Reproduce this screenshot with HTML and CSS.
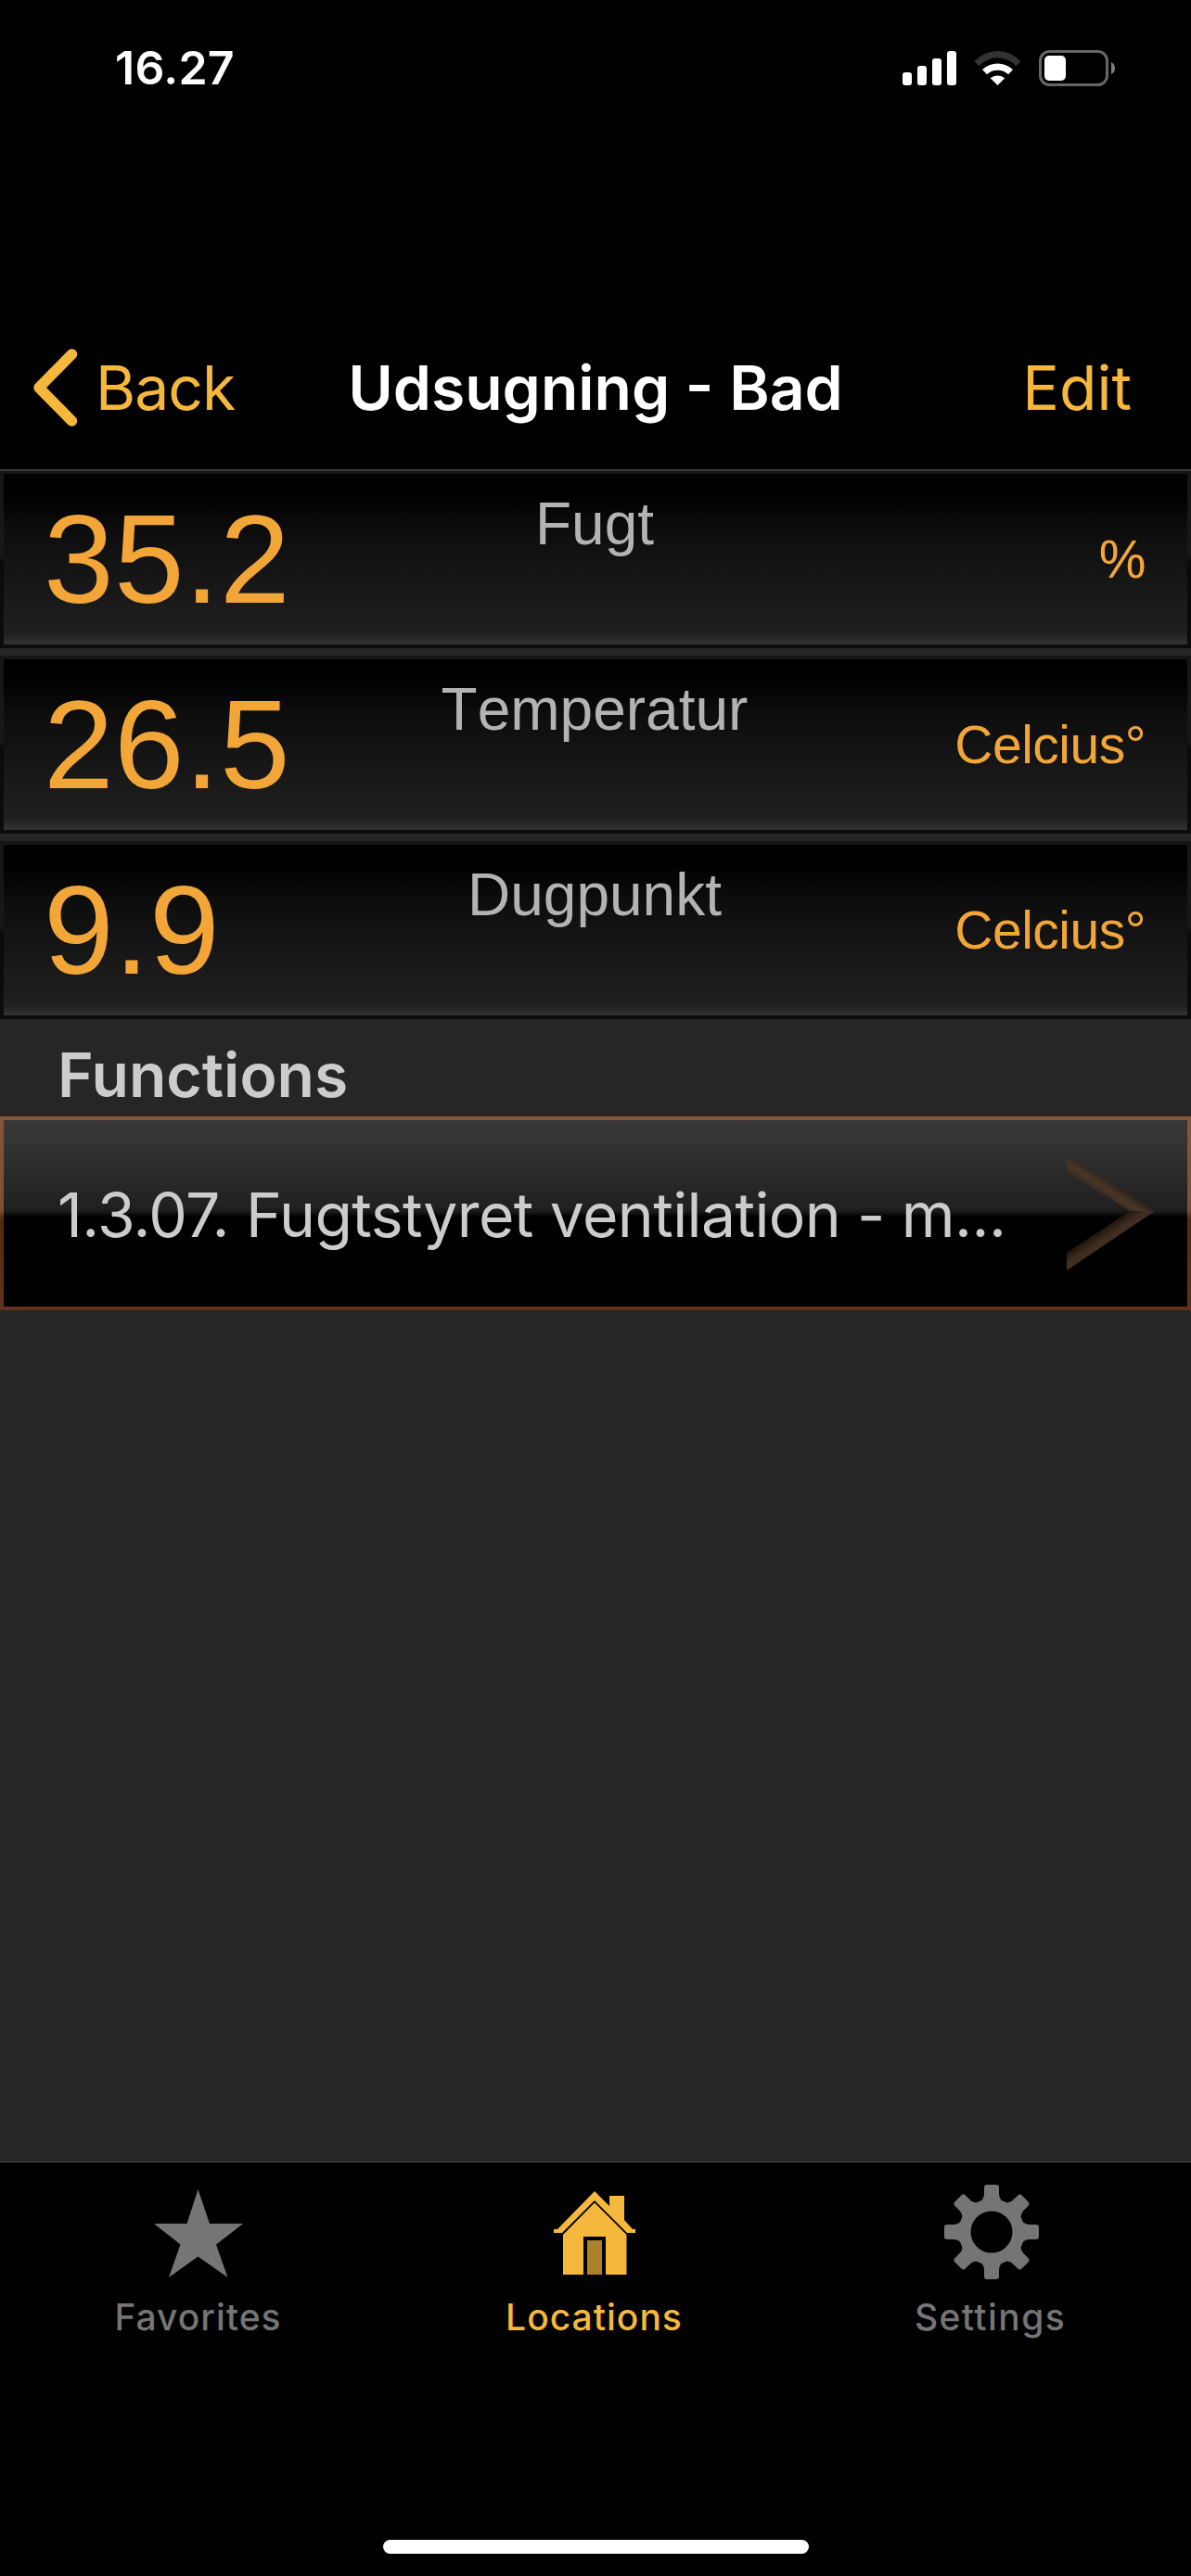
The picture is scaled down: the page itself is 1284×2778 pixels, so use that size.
FILE: index.html
```
<!DOCTYPE html>
<html lang="da">
<head>
    <meta charset="UTF-8">
    <meta name="viewport" content="width=device-width, initial-scale=1.0">
    <title>Udsugning - Bad</title>
    <link rel="stylesheet" href="styles.css">
</head>
<body>

    <div class="status-bar">
        <span class="time">16.27</span>
        <div class="status-icons">
            <svg width="58" height="37" viewBox="0 0 58 37" fill="#fff">
                <rect x="0" y="23" width="10" height="14" rx="3"/>
                <rect x="16" y="16" width="10" height="21" rx="3"/>
                <rect x="32" y="8" width="10" height="29" rx="3"/>
                <rect x="48" y="0" width="10" height="37" rx="3"/>
            </svg>
            <svg width="51" height="37" viewBox="0 0 51 37" fill="#fff">
                <path fill="#333" d="M0.5 11A34 34 0 0 1 50.5 11L45.5 16.2A27 27 0 0 0 5.5 16.2Z"/>
                <path d="M9 20A24 24 0 0 1 42 20L37 25.3A17 17 0 0 0 14 25.3Z"/>
                <path d="M17.7 29.3A12 12 0 0 1 33.3 29.3L25.5 37Z"/>
            </svg>
            <svg width="82" height="39" viewBox="0 0 82 39">
                <rect x="1.5" y="1.5" width="72" height="36" rx="10" fill="none" stroke="#666" stroke-width="3"/>
                <rect x="6" y="6" width="23" height="27" rx="5" fill="#fff"/>
                <path d="M78 13Q82 15 82 19.5T78 26Z" fill="#808080"/>
            </svg>
        </div>
    </div>

    <div class="nav-bar">
        <div class="back">
            <svg width="48" height="84" viewBox="0 0 48 84" fill="none" stroke="#f5b83d" stroke-width="11.5" stroke-linecap="round" stroke-linejoin="round">
                <path d="M42.500 6L7 42L42.500 78"/>
            </svg>
            <span>Back</span>
        </div>
        <h1>Udsugning - Bad</h1>
        <span class="edit">Edit</span>
    </div>

    <div class="content">
        <div class="readings">
            <div class="reading">
                <div class="reading-inner">
                    <span class="value">35.2</span>
                    <span class="name">Fugt</span>
                    <span class="unit">%</span>
                </div>
            </div>
            <div class="reading">
                <div class="reading-inner">
                    <span class="value">26.5</span>
                    <span class="name">Temperatur</span>
                    <span class="unit">Celcius°</span>
                </div>
            </div>
            <div class="reading">
                <div class="reading-inner">
                    <span class="value">9.9</span>
                    <span class="name">Dugpunkt</span>
                    <span class="unit">Celcius°</span>
                </div>
            </div>
        </div>

        <h2>Functions</h2>

        <div class="function">
            <div class="function-inner">
                <span class="function-name">1.3.07. Fugtstyret ventilation - m...</span>
                <svg width="96" height="126" viewBox="0 1 96 126">
                    <defs>
                        <linearGradient id="arrowTop" gradientUnits="userSpaceOnUse" x1="30" y1="38" x2="40" y2="23">
                            <stop offset="0" stop-color="#3a2c20"/>
                            <stop offset="0.5" stop-color="#483525"/>
                            <stop offset="1" stop-color="#2e251d"/>
                        </linearGradient>
                        <linearGradient id="arrowBottom" gradientUnits="userSpaceOnUse" x1="40" y1="79" x2="50" y2="94">
                            <stop offset="0" stop-color="#20170f"/>
                            <stop offset="0.5" stop-color="#3e2c1f"/>
                            <stop offset="1" stop-color="#463122"/>
                        </linearGradient>
                    </defs>
                    <path d="M0 0L95 60H68L0 17Z" fill="url(#arrowTop)"/>
                    <path d="M68 60H95L0 124V105Z" fill="url(#arrowBottom)"/>
                </svg>
            </div>
        </div>
    </div>

    <div class="tab-bar">
        <div class="tab">
            <svg width="96" height="104" viewBox="0 0 96 104" fill="#757575">
                <path d="M47.5 9L60 46H96L67 68.500L79.500 104L47.500 81.500L16 104L28.500 68.500L0 46H35.500Z"/>
            </svg>
            <span>Favorites</span>
        </div>
        <div class="tab active">
            <svg width="90" height="104" viewBox="0 0 90 104" fill="#f5b83d">
                <path d="M45 11L61 27V16H77V42L86 52H89V56H80L45 21L10 56H1V52H5Z"/>
                <path d="M45 23.500L79.500 58V101H57V60H33V101H11V58Z"/>
                <rect x="37" y="64" width="16" height="37" fill="#ab822a"/>
            </svg>
            <span>Locations</span>
        </div>
        <div class="tab">
            <svg width="102" height="104" viewBox="-52 -55 102 104">
                <defs>
                    <path id="tooth" d="M-16 -30Q-8 -34 -8 -41V-48Q-8 -51 -5 -51H5Q8 -51 8 -48V-41Q8 -34 16 -30Z"/>
                </defs>
                <g fill="#757575">
                    <use href="#tooth"/>
                    <use href="#tooth" transform="rotate(45)"/>
                    <use href="#tooth" transform="rotate(90)"/>
                    <use href="#tooth" transform="rotate(135)"/>
                    <use href="#tooth" transform="rotate(180)"/>
                    <use href="#tooth" transform="rotate(225)"/>
                    <use href="#tooth" transform="rotate(270)"/>
                    <use href="#tooth" transform="rotate(315)"/>
                </g>
                <circle r="29" fill="none" stroke="#757575" stroke-width="13"/>
            </svg>
            <span class="settings">Settings</span>
        </div>
    </div>

    <div class="home-indicator"></div>

</body>
</html>
```
FILE: styles.css
```
* {
    box-sizing: border-box;
}
body {
    margin: 0;
    height: 2778px;
    display: flex;
    flex-direction: column;
    background-color: #000;
    font-family: Inter, "Liberation Sans", sans-serif;
    overflow: hidden;
}
svg {
    display: block;
    flex: none;
    overflow: visible;
}
h1, h2 {
    margin: 0;
    font-weight: 600;
}
.status-bar {
    height: 146px;
    padding: 0 82px 0 124px;
    display: flex;
    align-items: center;
    justify-content: space-between;
}
.time {
    color: #fff;
    font-size: 50px;
    font-weight: 600;
    letter-spacing: 0.3px;
}
.status-icons {
    display: flex;
    align-items: center;
    gap: 19px;
}
.nav-bar {
    height: 362px;
    padding: 184px 64px 0 35px;
    display: grid;
    grid-template-columns: 1fr auto 1fr;
    align-items: center;
    border-bottom: 2px solid #3a3a3a;
    color: #f5b83d;
    font-size: 66px;
    white-space: nowrap;
}
.nav-bar h1 {
    margin-left: 29px;
    color: #fff;
    font-size: 66px;
}
.back {
    display: flex;
    align-items: center;
    gap: 20px;
}
.back span {
    letter-spacing: -1px;
}
.edit {
    text-align: right;
}
.content {
    flex: 1;
    background-color: #262626;
}
.readings {
    display: flex;
    flex-direction: column;
    gap: 8px;
}
.reading {
    height: 192px;
    padding: 4px;
    background: linear-gradient(#161616 0, #181818 48%, #0a0a0a 52%, #0c0c0c 100%);
}
.reading:first-child {
    height: 191px;
    padding-top: 3px;
}
.reading-inner {
    height: 184px;
    padding: 0 45px 0 43px;
    display: grid;
    grid-template-columns: 1fr 332px 1fr;
    align-items: center;
    background: linear-gradient(#000 0, #000 12%, #0d0d0d 32%, #202020 94%, #2a2a2a 97%, #333 100%);
    font-family: "Liberation Sans", Arial, sans-serif;
    font-kerning: none;
}
.value {
    padding-top: 1px;
    color: #f3a638;
    font-size: 136px;
    line-height: 183px;
    letter-spacing: 0.3px;
}
.name {
    align-self: start;
    margin-top: 22px;
    color: #b3b3b3;
    font-size: 64px;
    line-height: 64px;
    text-align: center;
    white-space: nowrap;
}
.unit {
    color: #f3a638;
    font-size: 57px;
    letter-spacing: -0.5px;
    text-align: right;
}
h2 {
    height: 105px;
    padding: 5px 62px 0;
    color: #ccc;
    font-size: 66px;
    line-height: 110px;
}
.function {
    height: 209px;
    padding: 4px;
    background: linear-gradient(#855637 0, #7c5033 48%, #542c12 53%, #5e3319 100%);
}
.function-inner {
    height: 201px;
    padding: 2px 34px 0 58px;
    display: flex;
    align-items: center;
    justify-content: space-between;
    background: linear-gradient(#383838 0, #353535 10%, #202020 47%, #1a1a1a 49%, #000 52%);
}
.function-name {
    color: #ccc;
    font-size: 66px;
    letter-spacing: -0.6px;
    white-space: nowrap;
}
.tab-bar {
    height: 408px;
    padding: 20px 3px 0 0;
    display: grid;
    grid-template-columns: repeat(3, 1fr);
    align-items: start;
    border-top: 1px solid #4a4a4a;
}
.tab {
    display: flex;
    flex-direction: column;
    align-items: center;
    color: #757575;
    font-size: 39px;
    font-weight: 500;
    letter-spacing: 1px;
}
.tab span {
    margin-top: 19px;
    line-height: 48px;
}
.tab .settings {
    letter-spacing: 1.4px;
}
.active {
    color: #f5b83d;
}
.home-indicator {
    width: 459px;
    height: 15px;
    margin: 0 auto 24px;
    border-radius: 8px;
    background-color: #fff;
}
```
